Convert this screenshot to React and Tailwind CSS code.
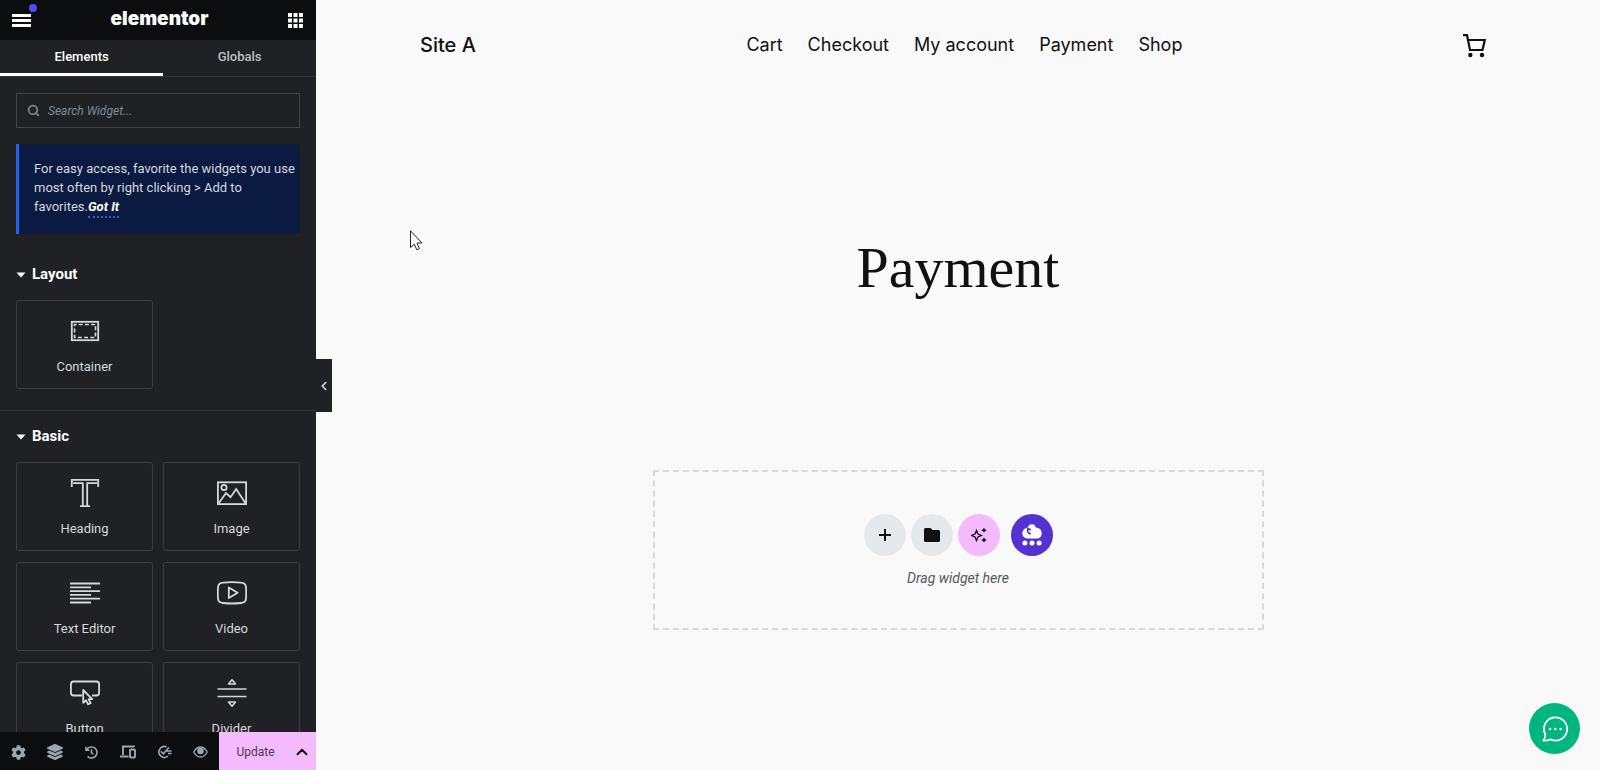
import React from "react";
import { ChevronLeft, ChevronUp, Search } from "lucide-react";
import { FaCog, FaLayerGroup, FaHistory } from "react-icons/fa";

const ContainerIcon = () => (
  <svg width="30" height="30" viewBox="0 0 30 30" fill="none" stroke="currentColor">
    <rect x="1.8" y="5.8" width="26.4" height="18.4" strokeWidth="1.8" />
    <rect x="4.5" y="8.5" width="21" height="13" strokeWidth="1.6" strokeDasharray="4 2.2" strokeDashoffset="2" />
  </svg>
);

const HeadingIcon = () => (
  <svg width="30" height="30" viewBox="0 0 30 30" fill="none" stroke="currentColor" strokeWidth="1.8">
    <path d="M1.8 9V1.8h26.4V9M3 5.2h9.8v22M27 5.2h-9.8v22M10 28.2h10" />
  </svg>
);

const ImageIcon = () => (
  <svg width="30" height="30" viewBox="0 0 30 30" fill="none" stroke="currentColor" strokeWidth="1.8">
    <rect x="0.9" y="4.3" width="28.2" height="21.8" />
    <circle cx="7" cy="9.5" r="2.6" />
    <path d="M1.5 25.5 9 15l4.5 4.2L19.2 11l9.3 14.2" />
  </svg>
);

const TextIcon = () => (
  <svg width="30" height="30" viewBox="0 0 30 30" fill="none" stroke="currentColor" strokeWidth="1.8">
    <path d="M0 5.5h30M0 9.3h21M0 13.1h30M0 16.9h21M0 20.7h30M0 24.5h21" />
  </svg>
);

const VideoIcon = () => (
  <svg width="30" height="30" viewBox="0 0 30 30" fill="none" stroke="currentColor" strokeWidth="1.8">
    <path d="M6 4.6q9-1 18 0q4.6.4 4.9 4q.6 6 0 12.4q-.3 3.6-4.9 4q-9 1-18 0q-4.6-.4-4.9-4q-.6-6.4 0-12.4q.3-3.6 4.9-4Z" />
    <path d="M11.8 9.5v10.6l8.8-5.3Z" strokeLinejoin="round" />
  </svg>
);

const ButtonIcon = () => (
  <svg width="30" height="30" viewBox="0 0 30 30" fill="none" stroke="currentColor" strokeWidth="1.8">
    <path d="M12 17.5H3.5Q.9 17.5 .9 14.8V6.2Q.9 3.5 3.5 3.5h23q2.6 0 2.6 2.7v8.6q0 2.7-2.6 2.7H22" />
    <path d="M13.2 12v12.8l2.9-2.5 2 4 2.5-1.2-2-3.9h3.6Z" strokeLinejoin="round" />
  </svg>
);

const DividerIcon = () => (
  <svg width="30" height="30" viewBox="0 0 30 30" fill="none" stroke="currentColor" strokeWidth="1.6">
    <path d="M.5 11h29M.5 18.5h29M11.5 6h7L15 1.8ZM11.5 24h7L15 28.2Z" strokeLinejoin="round" />
  </svg>
);

const DevicesIcon = () => (
  <svg width="16" height="14" viewBox="0 0 16 14" fill="none" stroke="currentColor" strokeWidth="1.9">
    <path d="M14 2V1.5H3V10M0 11.5h8.5" />
    <rect x="10" y="4.5" width="5" height="8" rx=".8" />
  </svg>
);

const ChecklistIcon = () => (
  <svg width="15" height="14" viewBox="0 0 15 14" fill="none" stroke="currentColor" strokeWidth="1.6">
    <path d="M9.5 2A5.4 5.4 0 1 0 11 11M3.8 6.3l2.5 2.5 5.7-6.3M9.5 6h5M11 8.5h3.5" />
  </svg>
);

const EyeIcon = () => (
  <svg width="15" height="12" viewBox="0 0 15 12" fill="none" stroke="currentColor" strokeWidth="1.3">
    <path d="M.7 6Q3.5 1 7.5 1t6.8 5q-2.8 5-6.8 5T.7 6Z" />
    <circle cx="7.5" cy="5" r="3.3" fill="currentColor" stroke="none" />
  </svg>
);

const CartIcon = () => (
  <svg width="23" height="24" viewBox="0 0 23 24" fill="none" stroke="currentColor" strokeWidth="2.2">
    <path d="M0 1.2h4L7 16h12.5l2.3-10H5" />
    <circle cx="7.3" cy="21" r="2.2" fill="currentColor" stroke="none" />
    <circle cx="19" cy="21" r="2.2" fill="currentColor" stroke="none" />
  </svg>
);

const SparkleIcon = () => (
  <svg width="16" height="16" viewBox="0 0 16 16" fill="currentColor">
    <path d="M5.5 3.5 7 7l3.5 1.5L7 10l-1.5 3.5L4 10 .5 8.5 4 7Z" fill="none" stroke="currentColor" strokeWidth="1.3" />
    <path d="m13 .8 1.2 1.6L16 3.2l-1.8.8L13 5.6 11.8 4 10 3.2l1.8-.8ZM13 10.6l1.2 1.6 1.8.8-1.8.8-1.2 1.6-1.2-1.6L10 13l1.8-.8Z" />
  </svg>
);

const CloudIcon = () => (
  <svg width="20" height="22" viewBox="0 0 20 22" fill="#fff">
    <path d="M6 3.5Q6.8.2 10 .3q3.3.2 3.8 3.2Q19.7 4 19.7 9.3q-.2 5.2-5.2 5.2h-9Q.4 14.3.3 9.3.4 4.5 6 3.5Z" />
    <path d="M5.8 4q-.8 5.2 3 6M6 4.200q1.200 1.600 3 1.300" fill="none" stroke="#5232d0" strokeWidth="1.5" />
    <circle cx="2.9" cy="19" r="2.5" />
    <circle cx="10" cy="19" r="2.5" />
    <circle cx="17.1" cy="19" r="2.5" />
  </svg>
);

const ChatIcon = () => (
  <svg width="26" height="26" viewBox="0 0 26 26" fill="none" stroke="#fff" strokeWidth="1.8">
    <path d="M3.2 18.2A11.6 11.6 0 1 1 8.5 23.4Q5 25 1.3 24.6 3.5 22 3.2 18.2Z" strokeLinejoin="round" />
    <g fill="#fff" stroke="none">
      <circle cx="8" cy="13" r="1.3" />
      <circle cx="13.3" cy="13" r="1.3" />
      <circle cx="18.6" cy="13" r="1.3" />
    </g>
  </svg>
);

const layoutWidgets = [{ name: "Container", icon: ContainerIcon }];

const basicWidgets = [
  { name: "Heading", icon: HeadingIcon },
  { name: "Image", icon: ImageIcon },
  { name: "Text Editor", icon: TextIcon },
  { name: "Video", icon: VideoIcon },
  { name: "Button", icon: ButtonIcon },
  { name: "Divider", icon: DividerIcon },
];

const footerTools = [
  { name: "Settings", icon: <FaCog size={15} /> },
  { name: "Structure", icon: <FaLayerGroup size={16} /> },
  { name: "History", icon: <FaHistory size={13} /> },
  { name: "Responsive mode", icon: <DevicesIcon /> },
  { name: "Checklist", icon: <ChecklistIcon /> },
  { name: "Preview", icon: <EyeIcon /> },
];

const pages = ["Cart", "Checkout", "My account", "Payment", "Shop"];

const WidgetGroup = ({ title, widgets }) => (
  <section className="px-4 pb-5">
    <h2>
      <button className="flex h-[51px] w-full items-center gap-1.5 text-[15px] font-bold text-white">
        <svg width="10" height="6" viewBox="0 0 10 6" fill="currentColor">
          <path d="M.5.5h9L5 5.5Z" />
        </svg>
        {title}
      </button>
    </h2>
    <div className="grid grid-cols-2 gap-x-2.5 gap-y-[11px]">
      {widgets.map(({ name, icon: Icon }) => (
        <button
          key={name}
          className="flex h-[89px] flex-col items-center gap-[11px] rounded-[3px] border border-[#3a3e44] pt-[15px] text-[13px] leading-5 text-[#d5d8dc]"
        >
          <Icon />
          {name}
        </button>
      ))}
    </div>
  </section>
);

const Panel = () => (
  <aside className="relative flex w-[316px] shrink-0 flex-col bg-[#1f2124] font-['Roboto',sans-serif] text-[#d5d8dc]">
    <header className="flex h-10 shrink-0 items-center justify-between bg-[#0c0d0e] pr-[13px] pl-3 text-white">
      <button aria-label="Menu" className="relative">
        <svg width="19" height="13" viewBox="0 0 19 13" fill="currentColor">
          <path d="M0 0h19v3H0zM0 5h19v3H0zM0 10h19v3H0z" />
        </svg>
        <span className="absolute -top-2.5 -right-1.5 h-2 w-2 rounded-full bg-[#524cff]" />
      </button>
      <span className="pb-0.5 font-['Inter',sans-serif] text-[19px] leading-6 font-black">elementor</span>
      <button aria-label="Widgets">
        <svg width="15" height="15" viewBox="0 0 15 15" fill="currentColor">
          <path d="M0 0h4v4H0zM5.5 0h4v4h-4zM11 0h4v4h-4zM0 5.5h4v4H0zM5.5 5.5h4v4h-4zM11 5.5h4v4h-4zM0 11h4v4H0zM5.5 11h4v4h-4zM11 11h4v4h-4z" />
        </svg>
      </button>
    </header>

    <div className="flex h-[37px] shrink-0 border-b border-[#33373c] text-[13px] font-medium">
      <button className="grow border-b-3 border-white px-10 text-white">Elements</button>
      <button className="grow border-b-3 border-transparent px-10 text-[#babfc5]">Globals</button>
    </div>

    <div className="min-h-0 flex-1 overflow-hidden">
      <label className="mx-4 mt-4 flex h-[35px] items-center gap-2 border border-[#3f444b] px-2.5">
        <Search size={13} strokeWidth={3} className="text-[#818a96]" />
        <input
          type="text"
          aria-label="Search widget"
          placeholder="Search Widget..."
          className="min-w-0 flex-1 bg-transparent text-[12px] outline-none placeholder:text-[#818a96] placeholder:italic"
        />
      </label>

      <div className="mx-4 mt-4 rounded-r-[3px] border-l-3 border-[#2563eb] bg-[#0a1a40] pt-[15px] pr-1 pb-[18px] pl-[15px] text-[13px] leading-[19px]">
        For easy access, favorite the widgets you use most often by right clicking &gt; Add to favorites.
        <a href="#" className="border-b-2 border-dotted border-[#2563eb] pb-0.5 font-bold text-white italic">
          Got It
        </a>
      </div>

      <div className="mt-[15px] border-b border-[#33373c] pb-px">
        <WidgetGroup title="Layout" widgets={layoutWidgets} />
      </div>
      <WidgetGroup title="Basic" widgets={basicWidgets} />
    </div>

    <footer className="flex h-[38px] shrink-0 bg-[#0c0d0e] text-[#9da5ae]">
      {footerTools.map((tool) => (
        <button key={tool.name} aria-label={tool.name} className="flex flex-1 items-center justify-center pt-0.5">
          {tool.icon}
        </button>
      ))}
      <div className="flex w-[97px] bg-[#f3bafd] pt-0.5 text-[#0c0d0e]">
        <button className="flex-1 pl-1 text-[12px] text-[#4a3c4e]">Update</button>
        <button aria-label="Save options" className="flex w-7 items-center justify-center">
          <ChevronUp size={18} strokeWidth={2.5} />
        </button>
      </div>
    </footer>

    <button
      aria-label="Hide panel"
      className="absolute top-[359px] left-full z-10 flex h-[53px] w-4 items-center justify-center bg-[#1f2124] text-[#d5d8dc]"
    >
      <ChevronLeft size={14} strokeWidth={3} />
    </button>
  </aside>
);

const Canvas = () => (
  <main className="relative min-w-0 flex-1 bg-[#f9f9f9] font-['Inter',sans-serif] text-[#111111]">
    <header className="flex h-[89px] items-center justify-between px-[104px]">
      <a href="#" className="text-[20px] font-medium">
        Site A
      </a>
      <nav className="flex gap-[25px] text-[18px]">
        {pages.map((page) => (
          <a key={page} href="#">
            {page}
          </a>
        ))}
      </nav>
      <button aria-label="Shopping cart" className="px-2.5 pt-3 pb-2.5">
        <CartIcon />
      </button>
    </header>

    <h1 className="mt-[141px] text-center font-['Liberation_Serif',serif] text-[58px] leading-[76px]">Payment</h1>

    <section className="mx-auto mt-[164px] flex h-[160px] max-w-[611px] flex-col items-center justify-center gap-2.5 border-2 border-dashed border-[#d5dadf] pt-[3px]">
      <div className="flex gap-[5px]">
        <button aria-label="Add new container" className="flex h-[42px] w-[42px] items-center justify-center rounded-full bg-[#e6e9ec]">
          <svg width="12" height="12" viewBox="0 0 12 12" stroke="currentColor" strokeWidth="2">
            <path d="M6 0v12M0 6h12" />
          </svg>
        </button>
        <button aria-label="Add template" className="flex h-[42px] w-[42px] items-center justify-center rounded-full bg-[#e6e9ec]">
          <svg width="16" height="14" viewBox="0 0 16 14" fill="currentColor">
            <path d="M1.5 0h5l2 2h6Q16 2 16 3.5v9q0 1.5-1.5 1.5h-13Q0 14 0 12.5v-11Q0 0 1.5 0Z" />
          </svg>
        </button>
        <button aria-label="Build with AI" className="flex h-[42px] w-[42px] items-center justify-center rounded-full bg-[#f3bafd]">
          <SparkleIcon />
        </button>
        <button aria-label="Cloud library" className="ml-1.5 flex h-[42px] w-[42px] items-center justify-center rounded-full bg-[#5232d0]">
          <CloudIcon />
        </button>
      </div>
      <p className="font-['Roboto',sans-serif] text-[14px] leading-6 text-[#54595f] italic">Drag widget here</p>
    </section>

    <svg className="absolute top-[230px] left-[94px]" width="13" height="21" viewBox="0 0 13 21" fill="#fff" stroke="#222" strokeWidth="1">
      <path d="M.5.8v16.7l3.8-3.3 2.5 5.6 2.6-1.2L7 13h5Z" />
    </svg>

    <button aria-label="Open chat" className="absolute right-5 bottom-4 flex h-[51px] w-[51px] items-center justify-center rounded-full bg-[#00b67f]">
      <ChatIcon />
    </button>
  </main>
);

const App = () => (
  <div className="flex h-screen overflow-hidden">
    <Panel />
    <Canvas />
  </div>
);

export default App;
